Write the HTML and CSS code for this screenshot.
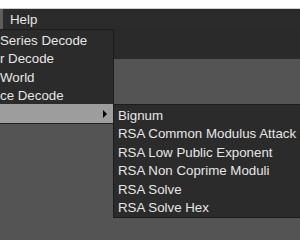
FILE: index.html
```html
<!DOCTYPE html>
<html lang="en">
<head>
    <meta charset="UTF-8">
    <meta name="viewport" content="width=device-width, initial-scale=1.0">
    <title>Tools Menu</title>
    <link rel="stylesheet" href="styles.css">
</head>
<body>
    <!-- Window strip -->
    <div class="top-strip"></div>

    <!-- Menu Bar -->
    <div class="menubar">
        <span class="menu-title active"></span>
        <span class="menu-title">Help</span>
    </div>

    <!-- Toolbar -->
    <div class="toolbar"></div>

    <!-- Workspace -->
    <div class="workspace"></div>

    <!-- Open Dropdown -->
    <ul class="dropdown">
        <li>Series Decode</li>
        <li>r Decode</li>
        <li>World</li>
        <li>ce Decode</li>
        <li class="has-sub open"><span class="arrow"></span></li>
    </ul>

    <!-- Submenu -->
    <ul class="submenu">
        <li>Bignum</li>
        <li>RSA Common Modulus Attack</li>
        <li>RSA Low Public Exponent</li>
        <li>RSA Non Coprime Moduli</li>
        <li>RSA Solve</li>
        <li>RSA Solve Hex</li>
    </ul>
</body>
</html>
```

FILE: styles.css
```css
/* Global Reset */
* {
    margin: 0;
    padding: 0;
    box-sizing: border-box;
    font-family: 'Liberation Sans', Arial, sans-serif;
}

body {
    background-color: #545454;
    color: #e6e6e6;
    font-size: 13.3px;
    height: 240px;
    overflow: hidden;
    position: relative;
}

/* Top strip */
.top-strip {
    height: 9px;
    background-color: #fff;
    border-bottom: 1px solid #cfcfcf;
}

/* Menu Bar */
.menubar {
    display: flex;
    height: 20px;
    background-color: #2b2b2b;
}

.menu-title {
    padding: 1px 7px 0;
    line-height: 20px;
}

.menu-title.active {
    width: 3px;
    padding: 0;
    background-color: #5e5e5e;
}

/* Toolbar */
.toolbar {
    height: 30px;
    background-color: #2a2a2a;
}

.workspace {
    height: 181px;
    background-color: #545454;
}

/* Menus */
.dropdown,
.submenu {
    position: absolute;
    list-style: none;
    background-color: #2b2b2b;
}

.dropdown {
    left: 0;
    top: 29px;
    width: 114px;
    border-top: 1px solid #1c1c1c;
    border-right: 1px solid #1c1c1c;
    border-bottom: 1px solid #232323;
}

.dropdown li {
    height: 18.6px;
    padding-top: 1.5px;
    line-height: 18.6px;
    white-space: nowrap;
}

.dropdown li.open {
    position: relative;
    background-color: #9d9d9d;
}

.arrow {
    position: absolute;
    right: 6px;
    top: 6px;
    border-top: 4px solid transparent;
    border-bottom: 4px solid transparent;
    border-left: 4px solid #000;
}

.submenu {
    left: 113px;
    top: 104px;
    width: 200px;
    border: 1px solid #1c1c1c;
}

.submenu li {
    height: 18.6px;
    padding-top: 1.5px;
    padding-left: 4px;
    line-height: 18.6px;
    white-space: nowrap;
}
```
